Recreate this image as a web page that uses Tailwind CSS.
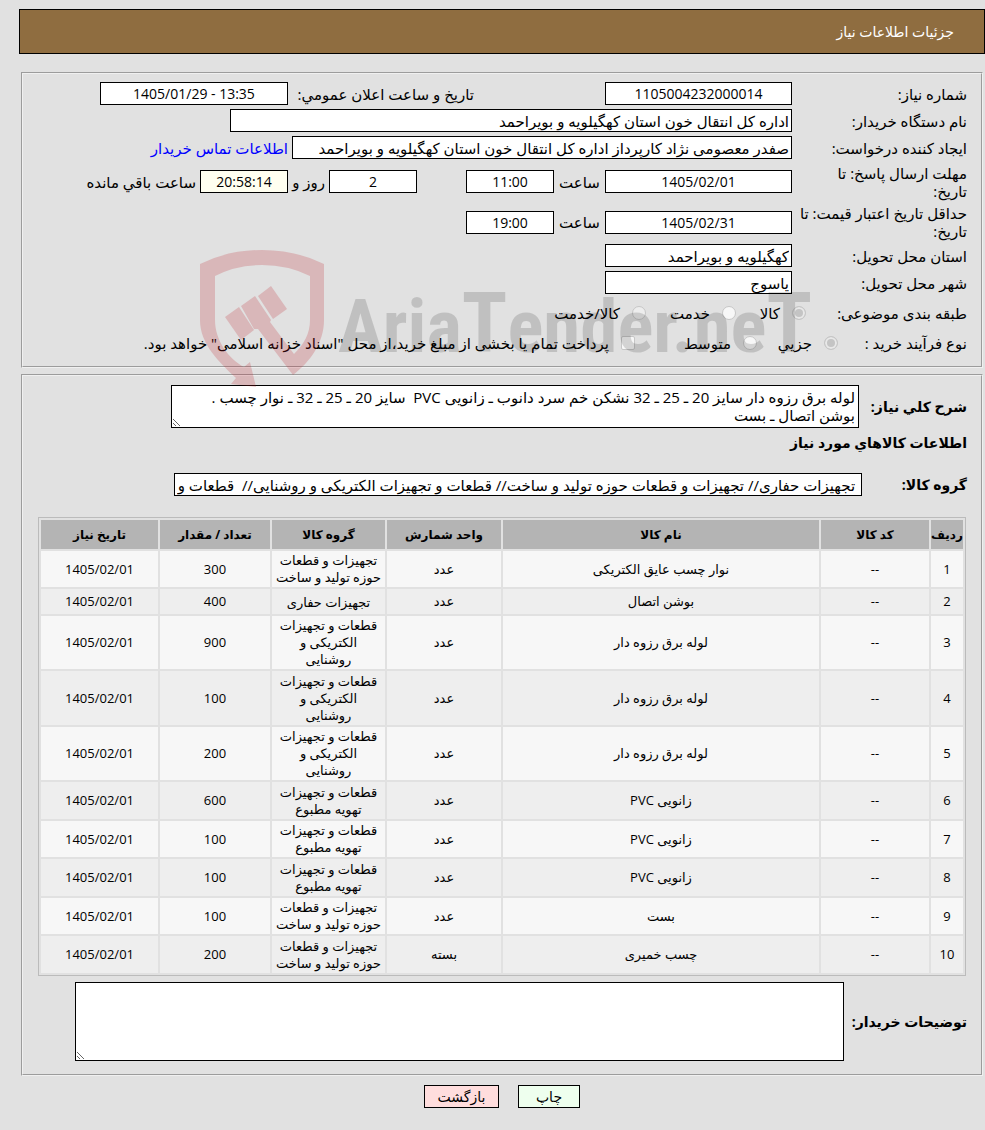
<!DOCTYPE html>
<html lang="fa" dir="rtl">
<head>
  <meta charset="UTF-8">
  <meta name="viewport" content="width=device-width, initial-scale=1.0">
  <title>جزئیات اطلاعات نیاز</title>
  <script src="https://cdn.jsdelivr.net/npm/@tailwindcss/browser@4"></script>
</head>
<body class="bg-[#e1e1e1] text-black text-[15px] leading-[18px] font-['Open_Sans','DejaVu_Sans',sans-serif]">
  <div class="relative pt-[9px] pl-[19px] pb-[22px]">

    <!-- Title bar -->
    <header class="flex h-[45px] items-center border border-black bg-[#8f6d40] px-[30px]">
      <h1 class="text-[14px] text-white">جزئیات اطلاعات نیاز</h1>
    </header>

    <main class="mt-[18px] mr-[2px] ml-[2px]">
      <!-- Need details -->
      <fieldset class="border-2 border-[#f0f0f0] [border-style:groove] px-[14px] pt-[6px] pb-[10px]">
        <div class="flex h-[27px] items-center">
          <label for="need-no" class="w-[175px] shrink-0">شماره نیاز:</label>
          <input id="need-no" type="text" readonly value="1105004232000014" class="h-[23px] w-[187px] border border-black bg-white px-[2px] text-center text-[14px]">
          <label for="announce" class="ms-[131px] w-[186px] shrink-0">تاریخ و ساعت اعلان عمومي:</label>
          <input id="announce" type="text" readonly dir="ltr" value="1405/01/29 - 13:35" class="h-[23px] w-[188px] border border-black bg-white px-[2px] text-center text-[14px]">
        </div>
        <div class="flex h-[27px] items-center">
          <label for="buyer" class="w-[175px] shrink-0">نام دستگاه خریدار:</label>
          <input id="buyer" type="text" readonly value="اداره کل انتقال خون استان کهگیلویه و بویراحمد" class="h-[23px] w-[562px] border border-black bg-white px-[2px]">
        </div>
        <div class="flex h-[27px] items-center">
          <label for="creator" class="w-[175px] shrink-0">ایجاد کننده درخواست:</label>
          <input id="creator" type="text" readonly value="صفدر معصومی نژاد کارپرداز اداره کل انتقال خون استان کهگیلویه و بویراحمد" class="h-[23px] w-[500px] border border-black bg-white px-[2px]">
          <a href="#" class="ms-[4px] text-[#0000ff]">اطلاعات تماس خریدار</a>
        </div>
        <div class="flex h-[41px] items-center">
          <label for="reply-date" class="w-[175px] shrink-0 pl-[30px]">مهلت ارسال پاسخ: تا تاریخ:</label>
          <input id="reply-date" type="text" readonly value="1405/02/01" class="h-[23px] w-[187px] border border-black bg-white px-[2px] text-center text-[14px]">
          <label for="reply-hour" class="w-[51px] shrink-0 text-center">ساعت</label>
          <input id="reply-hour" type="text" readonly value="11:00" class="h-[23px] w-[88px] border border-black bg-white px-[2px] text-center text-[14px]">
          <input id="days-left" type="text" readonly value="2" class="ms-[49px] h-[23px] w-[88px] border border-black bg-white px-[2px] text-center text-[14px]">
          <label for="days-left" class="w-[41px] shrink-0 pr-[4px]">روز و</label>
          <input id="time-left" type="text" readonly value="20:58:14" class="h-[23px] w-[88px] border border-black bg-[#fffff0] px-[2px] text-center text-[14px]">
          <label for="time-left" class="ms-[4px] whitespace-nowrap">ساعت باقي مانده</label>
        </div>
        <div class="flex h-[40px] items-center">
          <label for="valid-date" class="w-[175px] shrink-0">حداقل تاریخ اعتبار قیمت: تا تاریخ:</label>
          <input id="valid-date" type="text" readonly value="1405/02/31" class="h-[23px] w-[187px] border border-black bg-white px-[2px] text-center text-[14px]">
          <label for="valid-hour" class="w-[51px] shrink-0 text-center">ساعت</label>
          <input id="valid-hour" type="text" readonly value="19:00" class="h-[23px] w-[88px] border border-black bg-white px-[2px] text-center text-[14px]">
        </div>
        <div class="flex h-[27px] items-center">
          <label for="province" class="w-[175px] shrink-0">استان محل تحویل:</label>
          <input id="province" type="text" readonly value="کهگیلویه و بویراحمد" class="h-[23px] w-[187px] border border-black bg-white px-[2px]">
        </div>
        <div class="flex h-[27px] items-center">
          <label for="city" class="w-[175px] shrink-0">شهر محل تحویل:</label>
          <input id="city" type="text" readonly value="یاسوج" class="h-[23px] w-[187px] border border-black bg-white px-[2px]">
        </div>
        <div class="flex h-[34px] items-center">
          <span class="w-[161px] shrink-0">طبقه بندی موضوعی:</span>
          <label class="flex w-[70px] items-center gap-[12px]"><input type="radio" name="category" checked disabled class="size-[14px] shrink-0 appearance-none rounded-full border border-[#c6c6c6] bg-[#ededed] checked:bg-[#c4c4c4] checked:shadow-[inset_0_0_0_2px_#e8e8e8]">کالا</label>
          <label class="flex w-[90px] items-center gap-[12px]"><input type="radio" name="category" disabled class="size-[14px] shrink-0 appearance-none rounded-full border border-[#c6c6c6] bg-[#f7f7f7]">خدمت</label>
          <label class="flex items-center gap-[12px]"><input type="radio" name="category" disabled class="size-[14px] shrink-0 appearance-none rounded-full border border-[#c6c6c6] bg-[#ededed]">کالا/خدمت</label>
        </div>
        <div class="flex h-[26px] items-center">
          <span class="w-[129px] shrink-0">نوع فرآیند خرید :</span>
          <label class="flex w-[81px] items-center gap-[12px]"><input type="radio" name="process" checked disabled class="size-[14px] shrink-0 appearance-none rounded-full border border-[#c6c6c6] bg-[#ededed] checked:bg-[#c4c4c4] checked:shadow-[inset_0_0_0_2px_#e8e8e8]">جزیي</label>
          <label class="flex w-[122px] items-center gap-[12px]"><input type="radio" name="process" disabled class="size-[14px] shrink-0 appearance-none rounded-full border border-[#c6c6c6] bg-[#f7f7f7]">متوسط</label>
          <label class="flex items-center gap-[12px] whitespace-nowrap"><input type="checkbox" disabled class="size-[14px] shrink-0 appearance-none rounded-[2px] border border-[#c6c6c6] bg-[#f7f7f7]">پرداخت تمام یا بخشی از مبلغ خرید،از محل "اسناد خزانه اسلامی" خواهد بود.</label>
        </div>
      </fieldset>

      <!-- Requested goods -->
      <fieldset class="mt-[6px] border-2 border-[#f0f0f0] [border-style:groove] px-[14px] pt-[9px] pb-[13px]">
        <div class="flex items-center">
          <label for="summary" class="w-[108px] shrink-0 text-[14px] font-bold">شرح کلي نیاز:</label>
          <textarea id="summary" readonly class="h-[43px] w-[688px] resize overflow-hidden border border-black bg-white px-[3px] py-[2px]">لوله برق رزوه دار سایز 20 ـ 25 ـ 32 نشکن خم سرد دانوب ـ زانویی PVC  سایز 20 ـ 25 ـ 32 ـ نوار چسب .
بوشن اتصال ـ بست</textarea>
        </div>
        <h2 class="mt-[6px] text-[14px] font-bold">اطلاعات کالاهاي مورد نیاز</h2>
        <div class="mt-[21px] flex items-center">
          <label for="group" class="w-[105px] shrink-0 text-[14px] font-bold">گروه کالا:</label>
          <input id="group" type="text" readonly value=" تجهیزات حفاری// تجهیزات و قطعات حوزه تولید و ساخت// قطعات و تجهیزات الکتریکی و روشنایی//  قطعات و تجهیزات تهویه مطبوع" class="h-[23px] w-[688px] border border-black bg-white px-[2px]">
        </div>

        <div class="mt-[21px] px-[1px]">
          <table class="w-full table-fixed border-separate border-spacing-[2px] border border-[#bbbbbb] text-center text-[13px] leading-[17px]">
            <thead>
              <tr class="h-[29px] bg-[#b4b4b4] text-[12px]">
                <th class="w-[32px] whitespace-nowrap">ردیف</th>
                <th class="w-[108px]">کد کالا</th>
                <th>نام کالا</th>
                <th class="w-[114px]">واحد شمارش</th>
                <th class="w-[113px]">گروه کالا</th>
                <th class="w-[110px]">تعداد / مقدار</th>
                <th class="w-[117px]">تاریخ نیاز</th>
              </tr>
            </thead>
            <tbody id="items"></tbody>
          </table>
        </div>

        <div class="mt-[6px] flex items-center">
          <label for="notes" class="w-[123px] shrink-0 text-[14px] font-bold">توضیحات خریدار:</label>
          <textarea id="notes" readonly class="h-[79px] w-[769px] resize border border-black bg-white px-[3px] py-[2px]"></textarea>
        </div>
      </fieldset>
    </main>

    <div class="mt-[9px] flex justify-center gap-[19px]">
      <button type="button" class="h-[23px] w-[62px] border border-black bg-[#eeffee] text-[14px]">چاپ</button>
      <button type="button" class="h-[23px] w-[75px] border border-black bg-[#ffdddd] text-[14px]">بازگشت</button>
    </div>

    <!-- Watermark -->
    <svg class="pointer-events-none absolute top-[250px] left-[200px] h-[137px] w-[620px]" viewBox="0 0 620 137" direction="ltr" aria-hidden="true">
      <g fill="#be1e28" opacity=".21">
        <path fill-rule="evenodd" d="M0 14Q28 0 62 0T124 14V70C124 93 110 112 93 125L58 79L54 79L41 56L55 46L71 70L70 72L94 104C104 94 110 84 110 70V26Q88 15 62 15T15 26V70C15 91 29 109 44 117L50 112L56 137L31 134L36 128C19 112 0 94 0 70Z"/>
        <path d="M25 67L39 57L54 80L41 90Z"/>
        <path d="M58 46L71 36L87 59L73 69Z"/>
      </g>
      <text x="138" y="102" fill="#000" fill-opacity=".145" font-family="'Roboto Condensed', 'Liberation Sans', sans-serif" font-size="75" font-weight="700">Aria<tspan font-size="84">T</tspan>ender.ne<tspan font-size="84">T</tspan></text>
    </svg>
  </div>

  <script>
    const items = [
      { name: 'نوار چسب عایق الکتریکی', unit: 'عدد', group: 'تجهیزات و قطعات\nحوزه تولید و ساخت', qty: 300 },
      { name: 'بوشن اتصال', unit: 'عدد', group: 'تجهیزات حفاری', qty: 400 },
      { name: 'لوله برق رزوه دار', unit: 'عدد', group: 'قطعات و تجهیزات\nالکتریکی و\nروشنایی', qty: 900 },
      { name: 'لوله برق رزوه دار', unit: 'عدد', group: 'قطعات و تجهیزات\nالکتریکی و\nروشنایی', qty: 100 },
      { name: 'لوله برق رزوه دار', unit: 'عدد', group: 'قطعات و تجهیزات\nالکتریکی و\nروشنایی', qty: 200 },
      { name: 'زانویی PVC', unit: 'عدد', group: 'قطعات و تجهیزات\nتهویه مطبوع', qty: 600 },
      { name: 'زانویی PVC', unit: 'عدد', group: 'قطعات و تجهیزات\nتهویه مطبوع', qty: 100 },
      { name: 'زانویی PVC', unit: 'عدد', group: 'قطعات و تجهیزات\nتهویه مطبوع', qty: 100 },
      { name: 'بست', unit: 'عدد', group: 'تجهیزات و قطعات\nحوزه تولید و ساخت', qty: 100 },
      { name: 'چسب خمیری', unit: 'بسته', group: 'تجهیزات و قطعات\nحوزه تولید و ساخت', qty: 200 }
    ];

    document.getElementById('items').innerHTML = items.map((item, i) => `
      <tr class="h-[25px] odd:bg-[#f7f7f7] even:bg-[#eeeeee]">
        <td>${i + 1}</td>
        <td>--</td>
        <td>${item.name}</td>
        <td>${item.unit}</td>
        <td class="whitespace-pre-line ${i % 2 ? 'pt-[2px] pb-[1px]' : 'py-[1px]'}">${item.group}</td>
        <td>${item.qty}</td>
        <td>1405/02/01</td>
      </tr>`).join('');
  </script>
</body>
</html>
